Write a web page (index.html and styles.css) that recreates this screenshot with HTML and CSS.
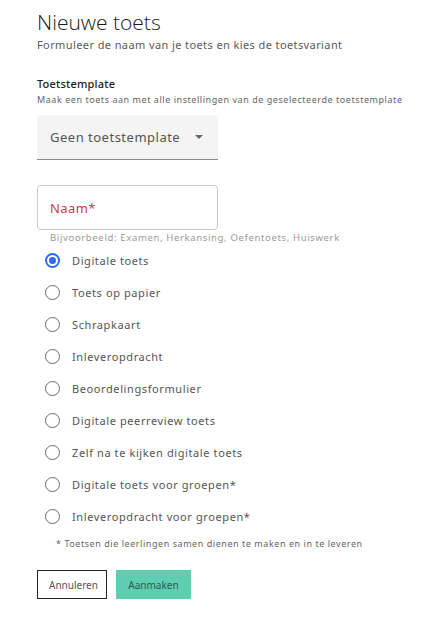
FILE: index.html
```html
<!DOCTYPE html>
<html lang="nl">
<head>
<meta charset="utf-8">
<title>Nieuwe toets</title>
<link rel="stylesheet" href="styles.css">
</head>
<body>
<main class="page">
  <h1 class="title">Nieuwe toets</h1>
  <p class="subtitle">Formuleer de naam van je toets en kies de toetsvariant</p>

  <section class="template">
    <h2 class="section-label">Toetstemplate</h2>
    <p class="section-help">Maak een toets aan met alle instellingen van de geselecteerde toetstemplate</p>
    <div class="select">
      <span class="select-value">Geen toetstemplate</span>
      <span class="select-arrow"></span>
    </div>
  </section>

  <div class="field">
    <div class="input"><span class="input-label">Naam*</span></div>
    <p class="hint">Bijvoorbeeld: Examen, Herkansing, Oefentoets, Huiswerk</p>
  </div>

  <ul class="radios">
    <li class="radio checked"><span class="dot"></span><span class="radio-label">Digitale toets</span></li>
    <li class="radio"><span class="dot"></span><span class="radio-label">Toets op papier</span></li>
    <li class="radio"><span class="dot"></span><span class="radio-label">Schrapkaart</span></li>
    <li class="radio"><span class="dot"></span><span class="radio-label">Inleveropdracht</span></li>
    <li class="radio"><span class="dot"></span><span class="radio-label">Beoordelingsformulier</span></li>
    <li class="radio"><span class="dot"></span><span class="radio-label">Digitale peerreview toets</span></li>
    <li class="radio"><span class="dot"></span><span class="radio-label">Zelf na te kijken digitale toets</span></li>
    <li class="radio"><span class="dot"></span><span class="radio-label">Digitale toets voor groepen*</span></li>
    <li class="radio"><span class="dot"></span><span class="radio-label">Inleveropdracht voor groepen*</span></li>
  </ul>
  <p class="footnote">* Toetsen die leerlingen samen dienen te maken en in te leveren</p>

  <div class="actions">
    <button class="btn btn-outline">Annuleren</button>
    <button class="btn btn-primary">Aanmaken</button>
  </div>
</main>
</body>
</html>
```

FILE: styles.css
```css
* { box-sizing: border-box; }
body {
  margin: 0;
  background: #ffffff;
  font-family: "Noto Sans", "Open Sans", sans-serif;
  color: #555;
}
.page {
  padding: 8px 20px 0 37px;
}
.title {
  margin: 0;
  font-family: "Open Sans", sans-serif;
  font-weight: 300;
  font-size: 21px;
  line-height: 28px;
  color: #1a1a1a;
}
.subtitle {
  margin: 0;
  font-size: 11px;
  line-height: 18px;
  color: #5a5a5a;
  letter-spacing: 0.4px;
}
.template {
  margin-top: 22px;
}
.section-label {
  margin: 0;
  font-size: 11px;
  line-height: 16px;
  font-weight: 500;
  color: #222;
  letter-spacing: 0.2px;
}
.section-help {
  margin: 0;
  font-size: 9px;
  line-height: 15px;
  color: #666;
  letter-spacing: 0.55px;
  white-space: nowrap;
}
.select {
  margin-top: 8px;
  width: 181px;
  height: 45px;
  background: #f4f4f4;
  border-bottom: 1px solid #8a8a8a;
  border-radius: 4px 4px 0 0;
  display: flex;
  align-items: center;
  justify-content: space-between;
  padding: 0 15px 0 13px;
}
.select-value {
  font-size: 13px;
  color: #555;
  letter-spacing: 0.5px;
}
.select-arrow {
  width: 0;
  height: 0;
  border-left: 4px solid transparent;
  border-right: 4px solid transparent;
  border-top: 4px solid #666;
}
.field {
  margin-top: 25px;
}
.input {
  width: 181px;
  height: 45px;
  border: 1px solid #c8c8c8;
  border-radius: 4px;
  display: flex;
  align-items: center;
  padding-left: 12px;
}
.input-label {
  font-size: 13px;
  color: #cc3a55;
  letter-spacing: 0.4px;
}
.hint {
  margin: 1px 0 0 13px;
  font-size: 9.5px;
  line-height: 13px;
  color: #9a9a9a;
  letter-spacing: 0.65px;
}
.radios {
  list-style: none;
  margin: 0;
  padding: 0;
}
.radio {
  height: 32px;
  display: flex;
  align-items: center;
  gap: 12px;
  padding-left: 8px;
}
.dot {
  width: 15px;
  height: 15px;
  border-radius: 50%;
  border: 1.5px solid #6a6a6a;
  flex: none;
  position: relative;
}
.radio.checked .dot {
  border: 2px solid #2b6cf0;
}
.radio.checked .dot::after {
  content: "";
  position: absolute;
  left: 2px;
  top: 2px;
  width: 7px;
  height: 7px;
  border-radius: 50%;
  background: #2b6cf0;
}
.radio-label {
  font-size: 11px;
  color: #555;
  letter-spacing: 0.6px;
}
.footnote {
  margin: 5px 0 0 19px;
  font-size: 9px;
  line-height: 14px;
  color: #666;
  letter-spacing: 0.55px;
}
.actions {
  margin-top: 19px;
  display: flex;
  gap: 9px;
}
.btn {
  height: 29px;
  font-family: "Noto Sans", sans-serif;
  font-size: 10px;
  padding: 0 11px;
  border-radius: 0;
}
.btn-outline {
  background: #fff;
  border: 1px solid #222;
  color: #555;
  width: 70px;
}
.btn-primary {
  background: #5ecdb0;
  border: none;
  color: #2f5c50;
  width: 75px;
}
```
